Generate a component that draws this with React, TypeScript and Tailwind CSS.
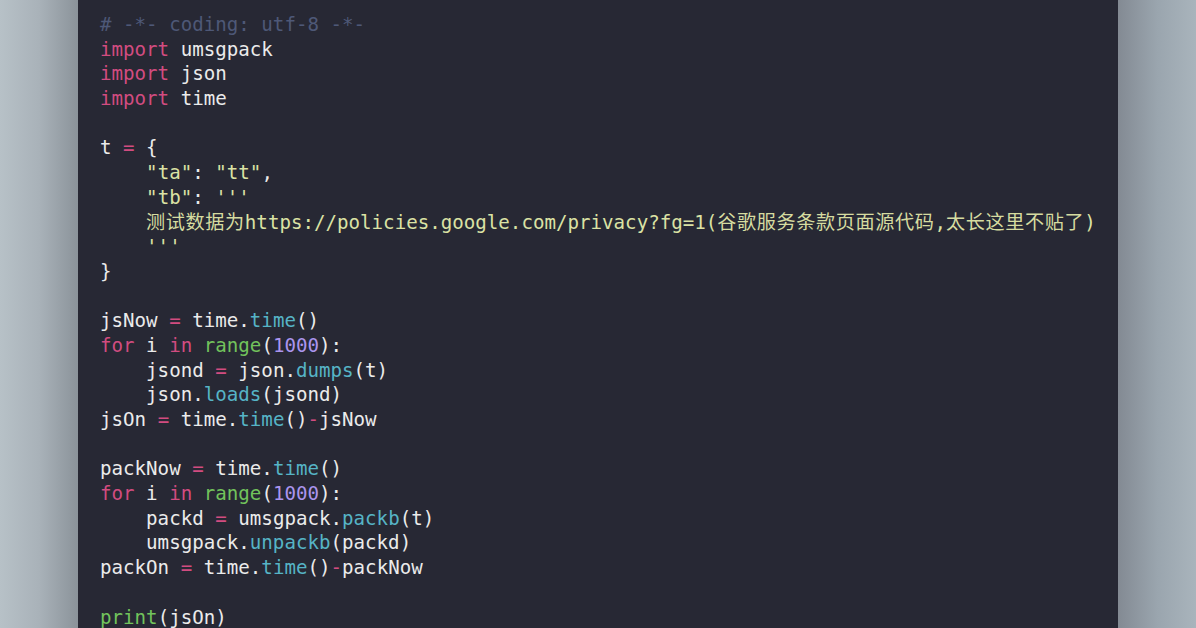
const c = {
  cm: "text-[#4e5877]",
  kw: "text-[#d24c80]",
  tx: "text-[#ebebeb]",
  st: "text-[#dbe2a4]",
  cj: "text-[#d6dca0] tracking-[0.6px]",
  fn: "text-[#56b4c6]",
  bi: "text-[#72c35c]",
  nm: "text-[#ab95ee]",
}

type Tok = [string, keyof typeof c]

const lines: Tok[][] = [
  [["# -*- coding: utf-8 -*-", "cm"]],
  [["import", "kw"], [" umsgpack", "tx"]],
  [["import", "kw"], [" json", "tx"]],
  [["import", "kw"], [" time", "tx"]],
  [],
  [["t ", "tx"], ["=", "kw"], [" {", "tx"]],
  [["    ", "tx"], ['"ta"', "st"], [": ", "tx"], ['"tt"', "st"], [",", "tx"]],
  [["    ", "tx"], ['"tb"', "st"], [": ", "tx"], ["'''", "st"]],
  [
    ["    ", "st"],
    ["测试数据为", "cj"],
    ["https://policies.google.com/privacy?fg=1(", "st"],
    ["谷歌服务条款页面源代码", "cj"],
    [",", "st"],
    ["太长这里不贴了", "cj"],
    [")", "st"],
  ],
  [["    '''", "st"]],
  [["}", "tx"]],
  [],
  [["jsNow ", "tx"], ["=", "kw"], [" time.", "tx"], ["time", "fn"], ["()", "tx"]],
  [["for", "kw"], [" i ", "tx"], ["in", "kw"], [" ", "tx"], ["range", "bi"], ["(", "tx"], ["1000", "nm"], ["):", "tx"]],
  [["    jsond ", "tx"], ["=", "kw"], [" json.", "tx"], ["dumps", "fn"], ["(t)", "tx"]],
  [["    json.", "tx"], ["loads", "fn"], ["(jsond)", "tx"]],
  [["jsOn ", "tx"], ["=", "kw"], [" time.", "tx"], ["time", "fn"], ["()", "tx"], ["-", "kw"], ["jsNow", "tx"]],
  [],
  [["packNow ", "tx"], ["=", "kw"], [" time.", "tx"], ["time", "fn"], ["()", "tx"]],
  [["for", "kw"], [" i ", "tx"], ["in", "kw"], [" ", "tx"], ["range", "bi"], ["(", "tx"], ["1000", "nm"], ["):", "tx"]],
  [["    packd ", "tx"], ["=", "kw"], [" umsgpack.", "tx"], ["packb", "fn"], ["(t)", "tx"]],
  [["    umsgpack.", "tx"], ["unpackb", "fn"], ["(packd)", "tx"]],
  [["packOn ", "tx"], ["=", "kw"], [" time.", "tx"], ["time", "fn"], ["()", "tx"], ["-", "kw"], ["packNow", "tx"]],
  [],
  [["print", "bi"], ["(jsOn)", "tx"]],
]

export default function App() {
  return (
    <div className="flex h-[628px] w-full overflow-hidden">
      <div className="w-[78px] shrink-0 bg-gradient-to-r from-[#b7c1c7] via-[#a9b2b9] to-[#8b939a]" />

      <div className="flex-1 bg-[#272834] pl-[22px] pt-[13px] overflow-hidden">
        <pre className="font-['DejaVu_Sans_Mono','Noto_Sans_CJK_SC',monospace] text-[19.15px] leading-[24.7px]">
          {lines.map((line, i) => (
            <div key={i} className="h-[24.7px] whitespace-pre">
              {line.map(([text, kind], j) => (
                <span key={j} className={c[kind]}>
                  {text}
                </span>
              ))}
            </div>
          ))}
        </pre>
      </div>

      <div className="w-[78px] shrink-0 bg-gradient-to-r from-[#838a93] via-[#9aa5ae] to-[#a9b4bc]" />
    </div>
  )
}
